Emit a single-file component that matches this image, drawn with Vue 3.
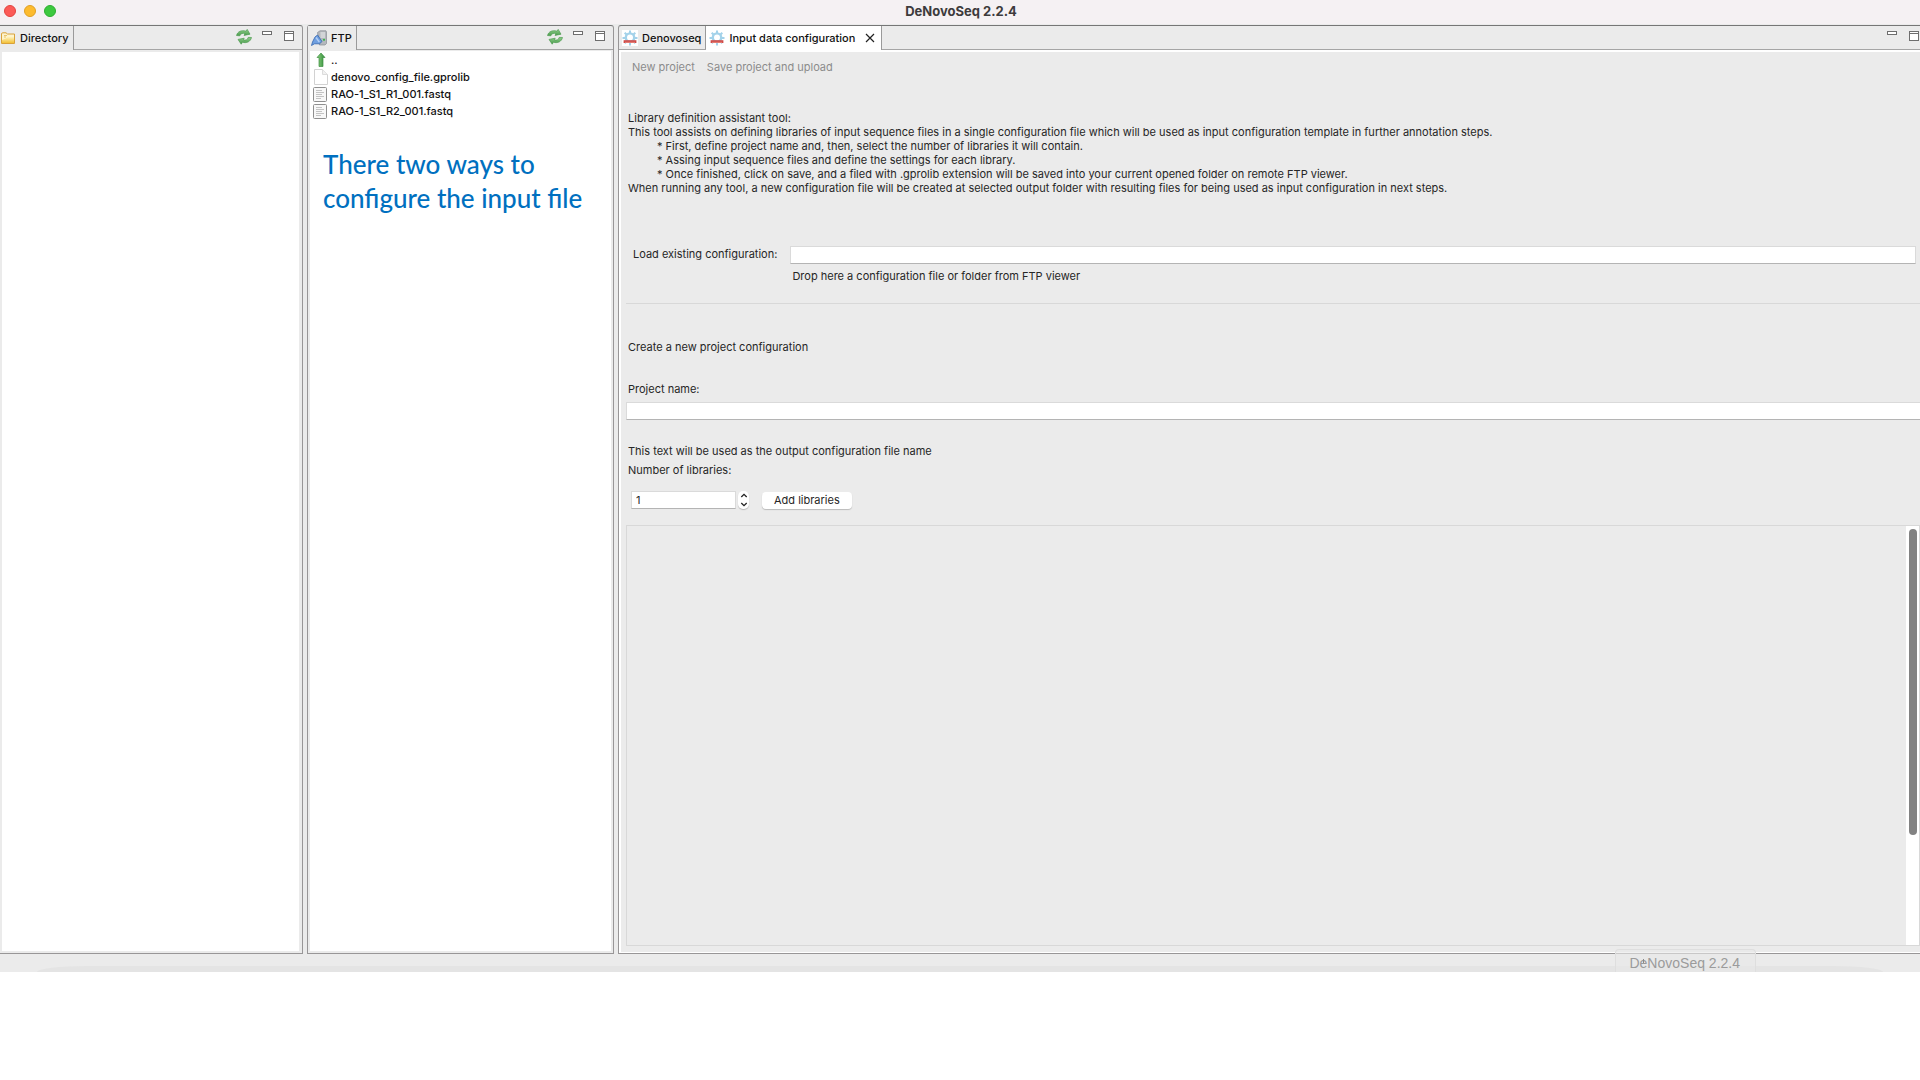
<template>
  <div class="app-window">
    <svg class="sprite" width="0" height="0" aria-hidden="true">
      <defs>
        <linearGradient id="green" x1="0" y1="0" x2="0" y2="1">
          <stop offset="0" stop-color="#8fce8b" />
          <stop offset="1" stop-color="#4a9c4c" />
        </linearGradient>
        <linearGradient id="gold" x1="0" y1="0" x2="0" y2="1">
          <stop offset="0" stop-color="#fff6c8" />
          <stop offset="1" stop-color="#f3c136" />
        </linearGradient>
        <linearGradient id="arrow" x1="0" y1="0" x2="1" y2="0">
          <stop offset="0" stop-color="#8ed07e" />
          <stop offset="1" stop-color="#2e8b3a" />
        </linearGradient>
      </defs>
      <symbol id="refresh" viewBox="0 0 16 16">
        <path d="M0.5 6.5C1.5 2.5 5.5 0.8 10 2.2L11.2 0.4L14 5.2L8 6.4L9 4.6C6.4 3.8 4.6 4.8 3.8 6.8Z" fill="url(#green)" stroke="#4d9b50" stroke-width="0.7" />
        <path d="M15.5 8.5C14.5 12.8 10.5 14.5 6.4 13.2L5.2 15.2L2 10.4L8.2 9.2L7.3 10.9C9.8 11.6 11.6 10.6 12.2 8.4Z" fill="url(#green)" stroke="#4d9b50" stroke-width="0.7" />
      </symbol>
      <symbol id="minimize" viewBox="0 0 10 12">
        <rect x="0.5" y="0.5" width="9" height="3" fill="#fff" stroke="#6e6e6e" />
      </symbol>
      <symbol id="maximize" viewBox="0 0 10 12">
        <rect x="0.5" y="0.5" width="9" height="9" fill="#fff" stroke="#6e6e6e" />
        <path d="M0 2.5H10" stroke="#6e6e6e" />
      </symbol>
      <symbol id="folder" viewBox="0 0 14 12">
        <path d="M0.5 11.5V2Q0.5 0.8 1.7 0.8H5L6.5 2H13.5V11.5Z" fill="#fdf3cd" stroke="#d9a23a" />
        <path d="M1 11V8L5.5 6L7 4.5H13V11Z" fill="url(#gold)" />
        <path d="M3 3.5H6M3 5H5" stroke="#e9c56b" />
      </symbol>
      <symbol id="server" viewBox="0 0 16 16">
        <path d="M6.5 2.5L9 0.8H15L15.5 2V13.5L14 15H8.5Z" fill="#b4b8bd" stroke="#888d94" stroke-width="0.7" />
        <path d="M9.5 3H14M9.5 5H14M9.5 7H14" stroke="#f1f1f1" />
        <circle cx="13" cy="9.8" r="1.1" fill="#39b54a" />
        <path d="M0.5 15.5L1.5 12L4 7L6.5 5L11 11.5L8.5 13.8L3.5 13.8Z" fill="#6f9fe0" stroke="#3366ae" stroke-width="0.8" />
        <path d="M5 7.5L8.3 12" stroke="#b3cff5" stroke-width="1.4" />
      </symbol>
      <symbol id="gear" viewBox="0 0 16 16">
        <rect width="16" height="16" fill="#fff" />
        <path d="M8 0.5V4M8 12V15.5M0.5 8H4M12 8H15.5M2.7 2.7L5 5M11 11L13.3 13.3M13.3 2.7L11 5M5 11L2.7 13.3" stroke="#a3d2ea" stroke-width="2" />
        <circle cx="8" cy="7.6" r="4.2" fill="#fff" stroke="#a3d2ea" stroke-width="2.4" />
        <path d="M1.6 10.2H14.4V13H1.6Z" fill="#cf4b48" />
        <path d="M3 12.3H13" stroke="#f5b3a7" stroke-width="0.6" />
      </symbol>
      <symbol id="up" viewBox="0 0 16 16">
        <path d="M8 1L12 5.5H10V14.5H6V5.5H4Z" fill="url(#arrow)" stroke="#3f8f43" stroke-width="0.7" />
      </symbol>
      <symbol id="blank" viewBox="0 0 16 16">
        <path d="M1.5 0.5H9.5L14.5 5.5V15.5H1.5Z" fill="#fff" stroke="#d2d2d2" />
        <path d="M9.5 0.5V5.5H14.5" fill="#f1f1f1" stroke="#dcdcdc" />
      </symbol>
      <symbol id="text" viewBox="0 0 16 16">
        <rect x="0.5" y="1.5" width="13" height="14" rx="1" fill="#f8f8f8" stroke="#8f8f8f" />
        <path d="M3 4.5H9M3 6.5H11M3 8.5H9M3 10.5H11M3 12.5H8" stroke="#c3c3c3" />
      </symbol>
    </svg>

    <header class="title-bar">
      <div class="lights">
        <button class="light red" aria-label="Close window"></button>
        <button class="light amber" aria-label="Minimize window"></button>
        <button class="light green" aria-label="Zoom window"></button>
      </div>
      <h1 class="title">DeNovoSeq 2.2.4</h1>
    </header>

    <main class="workbench">
      <section class="panel directory">
        <div class="tab-bar">
          <button class="tab view-tab">
            <svg class="icon-folder"><use href="#folder" /></svg>
            Directory
          </button>
          <div class="tools">
            <button class="tool" aria-label="Refresh"><svg class="icon"><use href="#refresh" /></svg></button>
            <button class="tool" aria-label="Minimize"><svg class="icon-small"><use href="#minimize" /></svg></button>
            <button class="tool" aria-label="Maximize"><svg class="icon-small"><use href="#maximize" /></svg></button>
          </div>
        </div>
        <div class="view"></div>
      </section>

      <section class="panel ftp">
        <div class="tab-bar">
          <button class="tab view-tab">
            <svg class="icon"><use href="#server" /></svg>
            FTP
          </button>
          <div class="tools">
            <button class="tool" aria-label="Refresh"><svg class="icon"><use href="#refresh" /></svg></button>
            <button class="tool" aria-label="Minimize"><svg class="icon-small"><use href="#minimize" /></svg></button>
            <button class="tool" aria-label="Maximize"><svg class="icon-small"><use href="#maximize" /></svg></button>
          </div>
        </div>
        <div class="view">
          <ul class="files">
            <li v-for="file in files" :key="file.name" class="file">
              <svg class="icon"><use :href="'#' + file.icon" /></svg>
              <span>{{ file.name }}</span>
            </li>
          </ul>
          <p class="note">There two ways to<br />configure the input file</p>
        </div>
      </section>

      <section class="panel editor">
        <div class="tab-bar">
          <button class="tab">
            <svg class="icon"><use href="#gear" /></svg>
            Denovoseq
          </button>
          <div class="tab active">
            <svg class="icon"><use href="#gear" /></svg>
            <span>Input data configuration</span>
            <button class="close" aria-label="Close tab">
              <svg width="10" height="10" viewBox="0 0 10 10"><path d="M1 1L9 9M9 1L1 9" stroke="#222" stroke-width="1.2" /></svg>
            </button>
          </div>
          <div class="tools">
            <button class="tool" aria-label="Minimize"><svg class="icon-small"><use href="#minimize" /></svg></button>
            <button class="tool" aria-label="Maximize"><svg class="icon-small"><use href="#maximize" /></svg></button>
          </div>
        </div>

        <div class="form">
          <div class="actions">
            <button class="action" disabled>New project</button>
            <button class="action" disabled>Save project and upload</button>
          </div>

          <div class="help">
            <p>Library definition assistant tool:</p>
            <p>This tool assists on defining libraries of input sequence files in a single configuration file which will be used as input configuration template in further annotation steps.</p>
            <p v-for="step in steps" :key="step" class="step">* {{ step }}</p>
            <p>When running any tool, a new configuration file will be created at selected output folder with resulting files for being used as input configuration in next steps.</p>
          </div>

          <div class="load">
            <label for="load">Load existing configuration:</label>
            <div class="load-field">
              <input id="load" v-model="existing" class="field" type="text" />
              <p class="hint">Drop here a configuration file or folder from FTP viewer</p>
            </div>
          </div>

          <hr class="rule" />

          <div class="create">
            <h2 class="subtitle">Create a new project configuration</h2>
            <label class="name-label" for="project">Project name:</label>
            <input id="project" v-model="project" class="field open" type="text" />
            <p class="name-hint">This text will be used as the output configuration file name</p>
            <label class="count-label" for="count">Number of libraries:</label>
            <div class="count-row">
              <input id="count" v-model.number="count" class="field count" type="number" min="1" />
              <div class="stepper">
                <button aria-label="More" @click="count++">
                  <svg width="8" height="5" viewBox="0 0 8 5"><path d="M1.3 4L4 1.3L6.7 4" /></svg>
                </button>
                <button aria-label="Less" @click="count = Math.max(1, count - 1)">
                  <svg width="8" height="5" viewBox="0 0 8 5"><path d="M1.3 1L4 3.7L6.7 1" /></svg>
                </button>
              </div>
              <button class="add">Add libraries</button>
            </div>
          </div>

          <div class="libraries">
            <div class="scroll-track">
              <div class="scroll-thumb"></div>
            </div>
          </div>
        </div>
      </section>
    </main>

    <footer class="status-bar">
      <div class="shade"></div>
      <div class="tooltip">
        DeNovoSeq 2.2.4
        <span class="caret"></span>
      </div>
    </footer>
  </div>
</template>

<script setup>
import { ref } from 'vue'

const existing = ref('')
const project = ref('')
const count = ref(1)

const files = [
  { name: '..', icon: 'up' },
  { name: 'denovo_config_file.gprolib', icon: 'blank' },
  { name: 'RAO-1_S1_R1_001.fastq', icon: 'text' },
  { name: 'RAO-1_S1_R2_001.fastq', icon: 'text' }
]

const steps = [
  'First, define project name and, then, select the number of libraries it will contain.',
  'Assing input sequence files and define the settings for each library.',
  'Once finished, click on save, and a filed with .gprolib extension will be saved into your current opened folder on remote FTP viewer.'
]
</script>

<style>
body {
  background: #fff;
}
</style>

<style scoped>
* {
  box-sizing: border-box;
}

p,
h1,
h2,
ul {
  margin: 0;
  padding: 0;
  font-weight: 400;
  font-size: inherit;
}

button {
  border: 0;
  padding: 0;
  background: none;
  font: inherit;
  color: inherit;
}

svg {
  display: block;
  flex: none;
}

.app-window {
  display: flex;
  flex-direction: column;
  height: 90vh;
  overflow: hidden;
  background: #ebebeb;
  color: #262626;
  font-family: Inter, "Liberation Sans", sans-serif;
  font-size: 11px;
  line-height: 14px;
}

.sprite {
  position: absolute;
}

.title-bar {
  display: grid;
  grid-template-columns: 1fr auto 1fr;
  align-items: center;
  height: 24px;
  padding: 0 2px 2px 4px;
  background: #f5f1f3;
}

.lights {
  display: flex;
  gap: 8px;
}

.light {
  width: 12px;
  height: 12px;
  border-radius: 50%;
}

.red {
  background: #fc5b57;
  border: 1px solid #e3443f;
}

.amber {
  background: #fdbb2e;
  border: 1px solid #e0a023;
}

.green {
  background: #3dc93f;
  border: 1px solid #2eae31;
}

.title {
  color: #3d3b3c;
  font-size: 13px;
  font-weight: 700;
}

.workbench {
  display: flex;
  flex: 1;
  gap: 4px;
  min-height: 0;
  padding-top: 1px;
}

.panel {
  display: flex;
  flex-direction: column;
  min-width: 0;
  border: 1px solid #989697;
  border-top-color: #767676;
  border-radius: 3px 3px 0 0;
}

.directory {
  flex: 0 0 303px;
  border-left: 0;
  border-top-left-radius: 0;
}

.ftp {
  flex: 0 0 307px;
}

.editor {
  flex: 1;
  border-right: 0;
  border-top-right-radius: 0;
}

.tab-bar {
  display: flex;
  flex: none;
  height: 24px;
  border-bottom: 1px solid #a5a5a5;
}

.tab {
  display: flex;
  align-items: center;
  gap: 4px;
  height: 23px;
  padding: 0 4px 0 3px;
  border-right: 1px solid #9a9a9a;
  color: #111;
  font-weight: 500;
}

.view-tab {
  height: 24px;
  background: #ebebeb;
}

.directory .tab {
  gap: 5px;
  padding-left: 1px;
}

.active {
  height: 24px;
  background: #fff;
}

.close {
  margin-left: 6px;
  margin-right: 2px;
}

.icon {
  width: 16px;
  height: 16px;
}

.icon-small {
  width: 10px;
  height: 12px;
}

.icon-folder {
  width: 14px;
  height: 12px;
}

.tools {
  display: flex;
  gap: 12px;
  margin-left: auto;
  padding: 3px 8px 0 0;
}

.tool {
  display: flex;
  align-items: center;
  height: 16px;
}

.tool + .tool {
  margin-left: -2px;
}

.tool:last-child {
  margin-left: 0;
}

.editor .tools {
  padding-right: 1px;
}

.view {
  flex: 1;
  margin: 1px 2px 2px;
  background: #fff;
}

.directory .view {
  margin-top: 2px;
  margin-right: 3px;
}

.files {
  list-style: none;
}

.file {
  display: flex;
  align-items: center;
  gap: 2px;
  height: 17px;
  padding-left: 3px;
  color: #111;
  font-weight: 500;
}

.note {
  padding: 28px 0 0 13px;
  color: #0070c0;
  font-family: Lato, "Open Sans", sans-serif;
  font-size: 26px;
  font-weight: 500;
  line-height: 34px;
  white-space: nowrap;
}

.form {
  display: flex;
  flex: 1;
  flex-direction: column;
  min-height: 0;
  padding: 8px 0 6px 5px;
  border: 2px solid #fff;
  border-right: 0;
  border-bottom-width: 1px;
}

.actions {
  display: flex;
  gap: 12px;
  padding: 0 6px;
}

.action {
  color: #8b8b8b;
}

.help {
  padding: 37px 0 0 2px;
}

.step {
  padding-left: 29px;
}

.load {
  display: flex;
  gap: 13px;
  padding: 51px 4px 0 7px;
}

.load > label {
  padding-top: 1px;
}

.load-field {
  flex: 1;
}

.field {
  display: block;
  width: 100%;
  height: 18px;
  margin: 0;
  padding: 0 4px;
  border: 1px solid #dadada;
  border-bottom-color: #b4b4b4;
  border-radius: 0;
  outline: 0;
  background: #fff;
  color: inherit;
  font: inherit;
}

.open {
  border-right: 0;
}

.hint {
  padding: 5px 0 0 2px;
}

.rule {
  width: 100%;
  margin: 20px 0 0;
  border: 0;
  border-top: 1px solid #d8d8d8;
}

.subtitle {
  padding: 36px 0 0 2px;
}

.name-label {
  display: block;
  padding: 28px 0 6px 2px;
}

.name-hint {
  padding: 24px 0 0 2px;
}

.count-label {
  display: block;
  padding: 5px 0 0 2px;
}

.count-row {
  display: flex;
  align-items: center;
  padding: 14px 0 0 5px;
}

.count {
  width: 105px;
  appearance: textfield;
}

.count::-webkit-inner-spin-button {
  appearance: none;
  margin: 0;
}

.stepper {
  display: flex;
  flex-direction: column;
  margin-left: 2px;
  border-radius: 5px;
  background: #fff;
  box-shadow: 0 1px 1px #bbb;
}

.stepper button {
  display: flex;
  align-items: center;
  justify-content: center;
  width: 11px;
  height: 9px;
}

.stepper path {
  fill: none;
  stroke: #222;
  stroke-width: 1.3;
}

.add {
  height: 17px;
  margin-left: 13px;
  padding: 0 12px;
  border-radius: 4px;
  background: #fff;
  box-shadow: 0 1px 1px #bbb;
}

.libraries {
  display: flex;
  flex: 1;
  justify-content: flex-end;
  min-height: 0;
  margin-top: 16px;
  border: 1px solid #d8d8d8;
}

.scroll-track {
  width: 13px;
  padding: 3px 2px;
  background: #fff;
}

.scroll-thumb {
  width: 8px;
  height: 74%;
  margin-left: 1px;
  border-radius: 4px;
  background: #828282;
}

.status-bar {
  position: relative;
  display: flex;
  align-items: flex-end;
  height: 18px;
}

.shade {
  flex: 1;
  height: 6px;
  margin: 0 37px;
  border-radius: 50px 50px 0 0 / 6px 6px 0 0;
  background: #e4e4e4;
}

.tooltip {
  position: absolute;
  right: 164px;
  bottom: 0;
  height: 23px;
  padding: 4px 15px 0 13px;
  border: 1px solid #dedede;
  border-bottom: 0;
  border-radius: 4px 4px 0 0;
  background: rgba(232, 232, 232, 0.6);
  color: #9b9b9b;
  font-family: "Liberation Sans", sans-serif;
  font-size: 14px;
  line-height: 18px;
}

.caret {
  position: absolute;
  left: 27px;
  top: 9px;
  width: 1px;
  height: 4px;
  background: #8a8a8a;
}
</style>
